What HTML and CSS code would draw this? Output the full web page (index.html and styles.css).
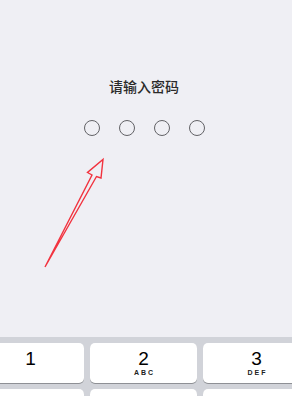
FILE: index.html
```html
<!DOCTYPE html>
<html lang="zh">
<head>
	<meta charset="UTF-8">
	<title>请输入密码</title>
	<link rel="stylesheet" href="styles.css">
</head>
<body>
	<div class="screen">
		<div class="lock">
			<p class="prompt">请输入密码</p>
			<div class="dots">
				<span class="dot"></span>
				<span class="dot"></span>
				<span class="dot"></span>
				<span class="dot"></span>
			</div>
		</div>

		<div class="keyboard">
			<div class="key"><span class="num">1</span></div>
			<div class="key"><span class="num">2</span><span class="abc">ABC</span></div>
			<div class="key"><span class="num">3</span><span class="abc">DEF</span></div>
			<div class="key"><span class="num">4</span><span class="abc">GHI</span></div>
			<div class="key"><span class="num">5</span><span class="abc">JKL</span></div>
			<div class="key"><span class="num">6</span><span class="abc">MNO</span></div>
		</div>

		<!-- 标注箭头 -->
		<svg class="arrow" width="292" height="396" viewBox="0 0 292 396">
			<polygon points="45,267 92,175 87.5,172.5 103,159.5 101,178 96.5,176.5"
				fill="none" stroke="#f2333f" stroke-width="1.4" stroke-linejoin="miter" />
		</svg>
	</div>
</body>
</html>
```

FILE: styles.css
```css
* {
	margin: 0;
	padding: 0;
}
body {
	background-color: #efeff4;
	font-family: "Liberation Sans", "Noto Sans CJK SC", sans-serif;
}
.screen {
	position: relative;
	width: 292px;
	height: 396px;
	overflow: hidden;
}
.lock {
	height: 337px;
	padding-right: 4px;
	box-sizing: border-box;
}
.prompt {
	padding-top: 77px;
	text-align: center;
	font-size: 14px;
	line-height: 20px;
	font-weight: 500;
	color: #2a2a2a;
}
.dots {
	display: flex;
	justify-content: center;
	gap: 19px;
	margin-top: 23px;
}
.dot {
	width: 16px;
	height: 16px;
	border: 1.6px solid #626266;
	border-radius: 50%;
	box-sizing: border-box;
}
.keyboard {
	display: grid;
	grid-template-columns: repeat(3, 107px);
	gap: 6px;
	width: max-content;
	margin-left: -29px;
	padding: 6px;
	background-color: #d1d3d9;
}
.key {
	display: flex;
	flex-direction: column;
	align-items: center;
	height: 40px;
	padding-top: 5px;
	box-sizing: border-box;
	background-color: #fff;
	border-radius: 5px;
	box-shadow: 0 1px 0 #8e9095;
}
.num {
	font-size: 19px;
	line-height: 21px;
	color: #000;
}
.abc {
	font-size: 7px;
	line-height: 8px;
	font-weight: bold;
	letter-spacing: 2px;
	padding-left: 2px;
	color: #222;
}
.arrow {
	position: absolute;
	top: 0;
	left: 0;
	pointer-events: none;
}
```
